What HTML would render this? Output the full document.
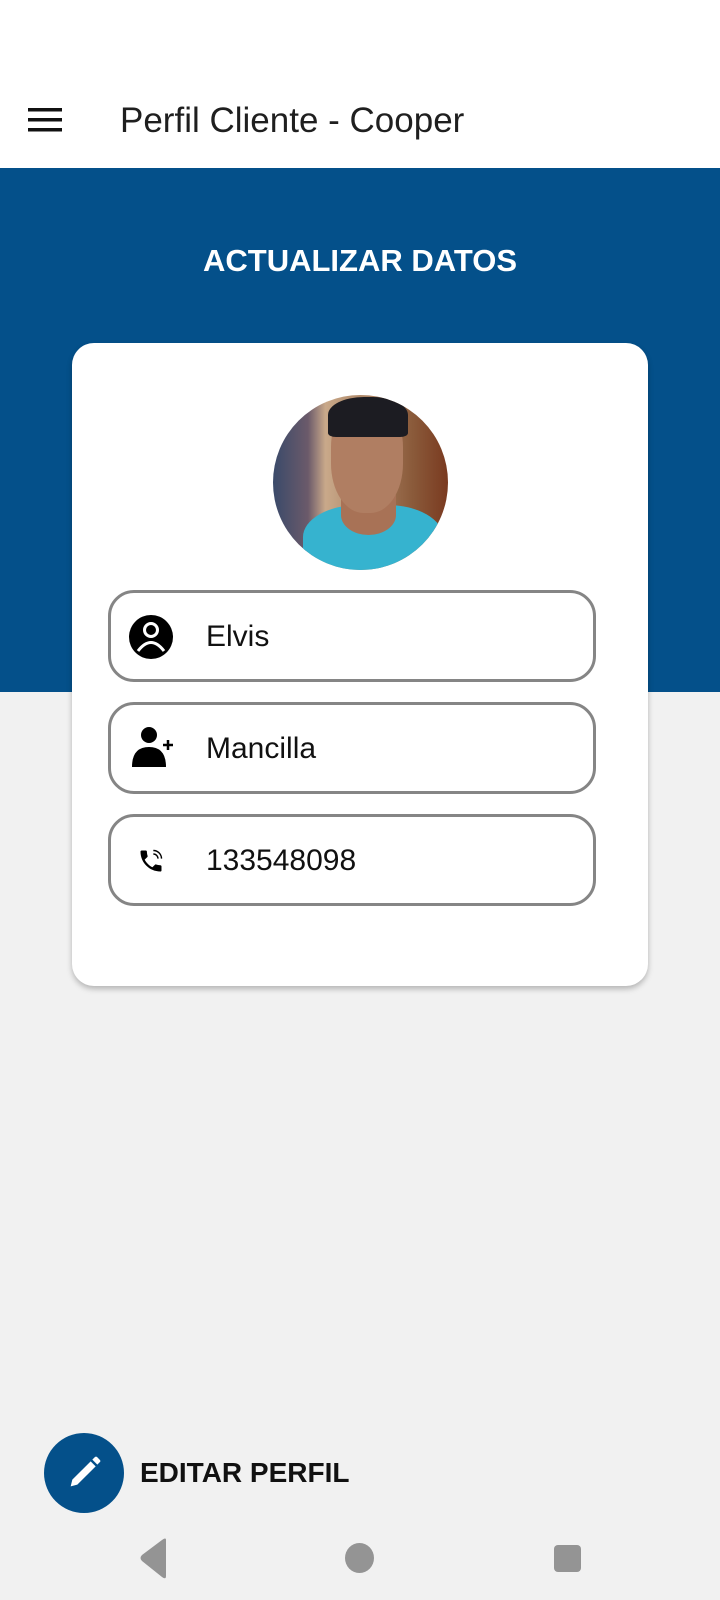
<!DOCTYPE html>
<html><head><meta charset="utf-8"><style>
*{margin:0;padding:0;box-sizing:border-box}
body{width:720px;height:1600px;background:#f1f1f1;font-family:"Liberation Sans",sans-serif;position:relative;overflow:hidden}
.hdr{position:absolute;left:0;top:0;width:720px;height:168px;background:#fff}
.title{position:absolute;left:120px;top:101px;font-size:35px;color:#1f1f1f}
.band{position:absolute;left:0;top:168px;width:720px;height:524px;background:#04508a}
.h2{position:absolute;left:0;width:720px;top:243px;text-align:center;color:#fff;font-weight:bold;font-size:31px}
.card{position:absolute;left:72px;top:343px;width:576px;height:643px;background:#fff;border-radius:22px;box-shadow:0 3px 6px rgba(0,0,0,.25)}
.av{position:absolute;left:273px;top:395px;width:175px;height:175px;border-radius:50%;overflow:hidden;background:linear-gradient(90deg,#3a4a6a 0,#6b5a6a 20%,#c9a98a 30%,#8a5a3a 80%,#7a3a20 100%)}
.face{position:absolute;left:58px;top:8px;width:72px;height:110px;border-radius:40% 40% 45% 45%;background:#b07e62}
.hair{position:absolute;left:55px;top:2px;width:80px;height:40px;border-radius:45% 45% 10% 10%;background:#1c1c22}
.shirt{position:absolute;left:30px;top:110px;width:140px;height:80px;border-radius:40% 40% 0 0;background:#36b3cf}
.neck{position:absolute;left:68px;top:100px;width:55px;height:40px;border-radius:0 0 50% 50%;background:#a87256}
.f{position:absolute;left:108px;width:488px;height:92px;border:3px solid #858585;border-radius:26px;background:#fff}
.f span{position:absolute;left:95px;top:27px;font-size:30px;color:#111}
.f svg{position:absolute}
.fab{position:absolute;left:44px;top:1433px;width:80px;height:80px;border-radius:50%;background:#04508a}
.ed{position:absolute;left:140px;top:1457px;font-size:28px;font-weight:bold;color:#111}
</style></head><body>
<div class="hdr">
<svg style="position:absolute;left:28px;top:108px" width="34" height="24"><rect y="0" width="34" height="3.5" fill="#111"/><rect y="10" width="34" height="3.5" fill="#111"/><rect y="20" width="34" height="3.5" fill="#111"/></svg>
<div class="title">Perfil Cliente - Cooper</div>
</div>
<div class="band"><div class="h2" style="top:75px">ACTUALIZAR DATOS</div></div>
<div class="card"></div>
<div class="av"><div class="shirt"></div><div class="neck"></div><div class="face"></div><div class="hair"></div></div>
<div class="f" style="top:590px"><svg style="left:17px;top:21px" width="46" height="46" viewBox="0 0 46 46"><circle cx="23" cy="23" r="22" fill="#000"/><circle cx="23" cy="16" r="6.5" fill="none" stroke="#fff" stroke-width="3"/><path d="M10 37 Q23 20 36 37" fill="none" stroke="#fff" stroke-width="3"/></svg><span>Elvis</span></div>
<div class="f" style="top:702px"><svg style="left:18px;top:20px" width="46" height="46" viewBox="0 0 46 46"><circle cx="20" cy="10" r="8" fill="#000"/><path d="M3 42 Q3 22 20 22 Q37 22 37 42Z" fill="#000"/><path d="M34 20h10M39 15v10" stroke="#000" stroke-width="2.5"/></svg><span>Mancilla</span></div>
<div class="f" style="top:814px"><svg style="left:26px;top:30px" width="28" height="28" viewBox="0 0 24 24"><path d="M6.6 10.8c1.4 2.8 3.8 5.1 6.6 6.6l2.2-2.2c.3-.3.7-.4 1-.2 1.1.4 2.3.6 3.6.6.6 0 1 .4 1 1V20c0 .6-.4 1-1 1C10.6 21 3 13.4 3 4c0-.6.4-1 1-1h3.5c.6 0 1 .4 1 1 0 1.3.2 2.5.6 3.6.1.3 0 .7-.2 1z" fill="#000"/><path d="M14 3a7 7 0 0 1 7 7M14 6a4 4 0 0 1 4 4" stroke="#000" fill="none" stroke-width="1.2"/></svg><span>133548098</span></div>
<div class="fab"><svg style="position:absolute;left:20px;top:20px" width="40" height="40" viewBox="0 0 24 24"><path d="M4 20l1-4L16 5l3 3L8 19z M17 4l1.5-1.5a1 1 0 0 1 1.4 0l1.6 1.6a1 1 0 0 1 0 1.4L20 7z" fill="#fff"/></svg></div>
<div class="ed">EDITAR PERFIL</div>
<svg style="position:absolute;left:138px;top:1538px" width="30" height="42"><path d="M28 2 L28 38 Q28 42 24 39 L4 23 Q1 20 4 17 L24 2 Q28 -1 28 2Z" fill="#949494"/></svg>
<div style="position:absolute;left:345px;top:1543px;width:29px;height:30px;border-radius:50%;background:#949494"></div>
<div style="position:absolute;left:554px;top:1545px;width:27px;height:27px;border-radius:4px;background:#949494"></div>
</body></html>
